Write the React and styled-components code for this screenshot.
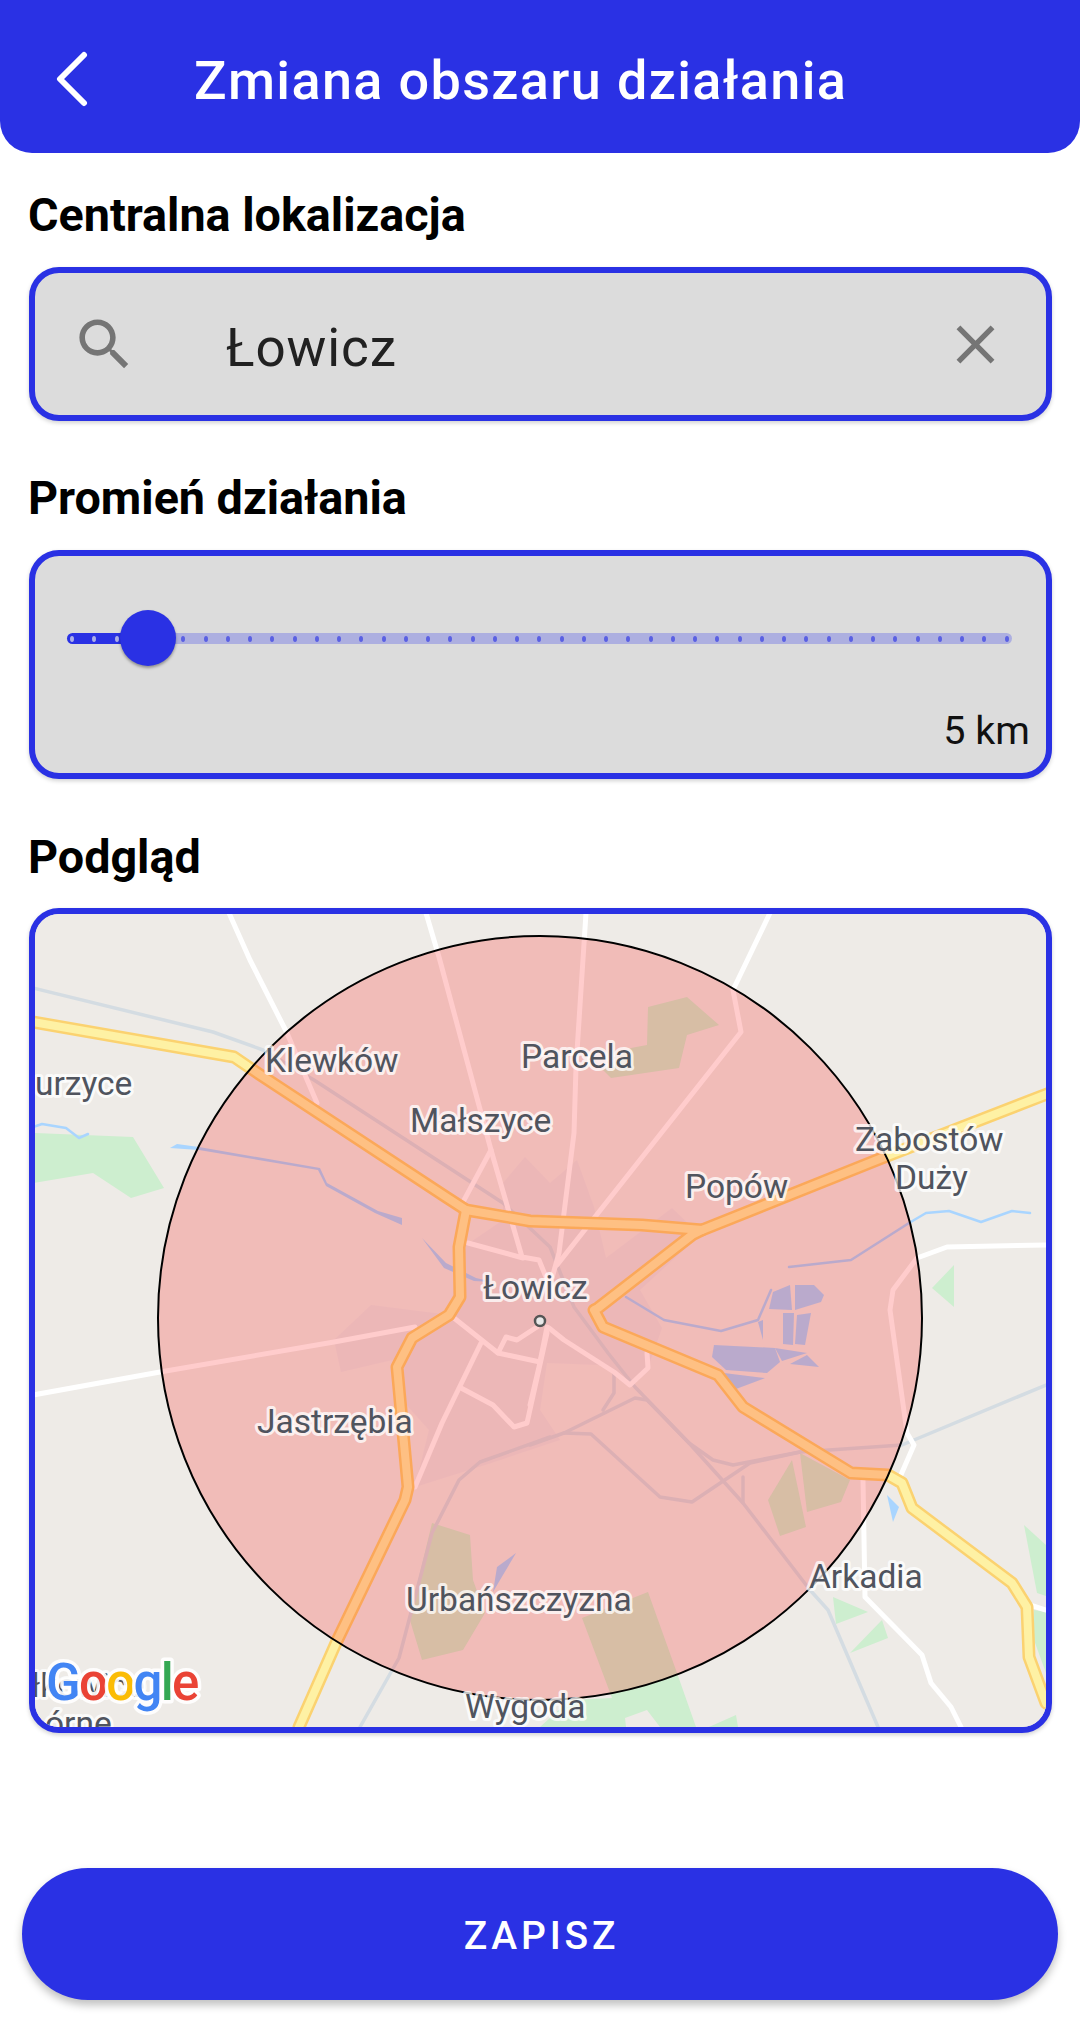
import React from 'react';
import styled, { createGlobalStyle } from 'styled-components';

const BLUE = '#2a31e4';

const Global = createGlobalStyle`
  html, body { margin: 0; padding: 0; background: #fff; }
  body { font-family: Roboto, "Liberation Sans", sans-serif; overflow: hidden; }
`;

const Page = styled.div`
  width: 1080px;
  height: 2022px;
  display: flex;
  flex-direction: column;
  background: #fff;
`;

const Header = styled.header`
  height: 153px;
  box-sizing: border-box;
  flex: none;
  display: flex;
  align-items: center;
  background: ${BLUE};
  border-radius: 0 0 32px 32px;
  padding: 5px 0 0 54px;
`;

const BackIcon = styled.svg`
  width: 36px;
  height: 56px;
  flex: none;
  fill: none;
  stroke: #fff;
  stroke-width: 6;
  stroke-linecap: round;
  stroke-linejoin: round;
`;

const Title = styled.h1`
  margin: 4px 0 0 104px;
  color: #fff;
  font-size: 54px;
  font-weight: 500;
  line-height: 58px;
  letter-spacing: 1.35px;
  white-space: nowrap;
`;

const Label = styled.h2`
  margin: ${p => p.$top}px 0 0 28px;
  height: 50px;
  color: #000;
  font-size: 46.7px;
  font-weight: 700;
  line-height: 50px;
  white-space: nowrap;
`;

const Panel = styled.div`
  box-sizing: border-box;
  width: 1023px;
  margin: ${p => p.$top}px 0 0 29px;
  border: 6px solid ${BLUE};
  border-radius: 30px;
  background: #dcdcdc;
  box-shadow: 0 2px 4px rgba(0, 0, 0, 0.18);
`;

const SearchPanel = styled(Panel)`
  height: 154px;
  display: flex;
  align-items: center;
  padding-left: 36px;
  padding-right: 38px;
`;

const SearchIcon = styled.svg`
  width: 67px;
  height: 67px;
  flex: none;
  fill: #757575;
`;

const SearchValue = styled.span`
  flex: 1;
  margin-left: 88px;
  padding-top: 8px;
  color: #212121;
  font-size: 53px;
  line-height: 60px;
  letter-spacing: 0.9px;
`;

const ClearIcon = styled.svg`
  width: 65px;
  height: 65px;
  flex: none;
  fill: #757575;
`;

const SliderPanel = styled(Panel)`
  height: 229px;
  padding: 77px 0 0 32px;
`;

const Track = styled.div`
  position: relative;
  width: 945px;
  height: 11px;
  box-sizing: border-box;
  padding: 0 3px;
  display: flex;
  align-items: center;
  justify-content: space-between;
  border-radius: 6px;
  background: linear-gradient(to right, ${BLUE} 0 81px, #adafe0 81px 100%);
`;

const Tick = styled.i`
  display: block;
  width: 4px;
  height: 6px;
  border-radius: 50%;
  background: ${p => (p.$on ? '#adafe8' : '#5a60e2')};
`;

const Thumb = styled.div`
  position: absolute;
  left: 53px;
  top: -23px;
  width: 56px;
  height: 56px;
  border-radius: 50%;
  background: ${BLUE};
  box-shadow: 0 2px 3px rgba(0, 0, 0, 0.35);
`;

const SliderValue = styled.div`
  margin: 65px 16px 0 0;
  text-align: right;
  color: #111;
  font-size: 39.5px;
  line-height: 44px;
`;

const MapPanel = styled(Panel)`
  height: 825px;
  overflow: hidden;
  background: #eeebe7;
`;

const MapSvg = styled.svg`
  display: block;
  width: 1011px;
  height: 813px;
`;

const PlaceName = styled.text`
  font-family: Roboto, sans-serif;
  font-size: 33.5px;
  fill: #50545e;
  stroke: rgba(255, 255, 255, 0.75);
  stroke-width: 6px;
  paint-order: stroke;
  stroke-linejoin: round;
`;

const GoogleMark = styled.text`
  font-family: Roboto, sans-serif;
  font-size: 51px;
  font-weight: 500;
  letter-spacing: -1.7px;
  stroke: rgba(255, 255, 255, 0.9);
  stroke-width: 7px;
  paint-order: stroke;
  stroke-linejoin: round;
`;

const SaveButton = styled.button`
  display: block;
  box-sizing: border-box;
  width: 1036px;
  height: 132px;
  margin: 135px 0 0 22px;
  padding: 4px 0 0 3px;
  border: 0;
  border-radius: 66px;
  background: ${BLUE};
  color: #fff;
  font-family: Roboto, sans-serif;
  font-size: 39px;
  font-weight: 500;
  letter-spacing: 3.8px;
  box-shadow: 0 5px 9px rgba(0, 0, 0, 0.25);
`;

const pts = a => a.map(p => p.join(',')).join(' ');

const greens = [
  [[33,1133],[133,1137],[164,1188],[131,1198],[93,1173],[33,1183]],
  [[954,1265],[932,1288],[954,1307]],
  [[1024,1525],[1046,1545],[1046,1596],[1037,1593]],
  [[1034,1610],[1046,1612],[1046,1673],[1034,1640]],
  [[833,1597],[868,1612],[836,1624]],
  [[882,1620],[888,1638],[850,1653]],
  [[582,1618],[648,1592],[677,1673],[696,1727],[660,1727],[647,1710],[625,1718],[626,1727],[540,1727],[570,1700],[612,1698]],
  [[709,1727],[736,1715],[738,1727]],
  [[648,1007],[687,997],[719,1025],[687,1035],[679,1068],[611,1078],[603,1070],[631,1048],[647,1045]],
  [[800,1453],[850,1480],[841,1502],[807,1512]],
  [[792,1460],[806,1527],[780,1536],[768,1500]],
  [[432,1523],[470,1535],[473,1580],[485,1613],[463,1650],[422,1660],[409,1617],[419,1577]],
  [[414,1350],[419,1350],[417,1369],[405,1367]],
];

const town = [[503,1183],[525,1157],[550,1183],[577,1160],[594,1207],[606,1258],[672,1208],[700,1235],[640,1290],[662,1328],[648,1367],[630,1385],[600,1365],[547,1363],[540,1410],[560,1440],[485,1465],[415,1487],[429,1430],[402,1400],[405,1357],[341,1372],[334,1340],[371,1305],[450,1315],[459,1250],[503,1220]];

const lakes = [
  [[714,1345],[775,1348],[780,1362],[767,1373],[726,1370],[712,1357]],
  [[724,1373],[765,1378],[736,1389]],
  [[775,1348],[807,1353],[782,1361]],
  [[807,1355],[819,1367],[790,1364]],
  [[783,1313],[794,1313],[793,1345],[783,1344]],
  [[797,1315],[811,1313],[805,1345],[795,1344]],
  [[773,1292],[790,1285],[792,1310],[769,1309]],
  [[795,1285],[814,1285],[824,1295],[821,1302],[795,1310]],
  [[758,1322],[763,1320],[763,1340]],
  [[170,1148],[177,1144],[199,1147],[320,1168],[327,1183],[378,1211],[402,1218],[402,1225],[375,1213],[326,1186],[318,1170],[199,1150]],
  [[422,1238],[446,1263],[476,1278],[493,1282],[474,1281],[444,1268]],
  [[516,1553],[500,1580],[493,1592],[497,1567]],
  [[887,1495],[899,1507],[893,1522]],
];

const rivers = [
  [[789,1267],[851,1260],[909,1223],[926,1213],[949,1211],[981,1222],[1012,1211],[1030,1213]],
  [[626,1297],[664,1320],[721,1331],[758,1320],[771,1290]],
  [[33,1127],[42,1124],[66,1128],[79,1138],[88,1134]],
];

const rails = [
  [[33,988],[213,1032],[263,1050],[314,1080],[503,1203],[550,1247],[574,1307],[608,1353],[635,1387],[689,1443],[743,1503],[810,1590],[828,1610],[878,1727]],
  [[550,1437],[480,1462],[459,1480],[432,1533],[399,1658],[360,1727]],
  [[530,1445],[564,1433],[635,1398],[647,1400],[689,1443],[713,1460],[733,1465],[800,1452],[902,1445],[1046,1385]],
  [[564,1433],[591,1434],[660,1497],[692,1502],[750,1463],[800,1452]],
  [[743,1477],[743,1503]],
  [[614,1373],[614,1393],[603,1410]],
];

const minor = [
  [[229,913],[250,960],[287,1033],[317,1103]],
  [[426,913],[439,957],[491,1150],[522,1257],[539,1260],[548,1282]],
  [[491,1150],[463,1202]],
  [[586,913],[576,1067],[574,1133],[559,1253],[552,1278]],
  [[770,913],[733,990],[741,1032],[557,1265]],
  [[33,1395],[160,1372],[334,1342],[415,1327]],
  [[468,1243],[523,1258]],
  [[454,1318],[498,1353],[540,1362],[547,1327]],
  [[498,1353],[506,1337],[517,1340],[540,1325]],
  [[481,1343],[442,1423],[415,1487]],
  [[461,1388],[493,1405],[514,1427],[527,1423],[547,1333],[530,1405]],
  [[549,1328],[564,1340],[614,1372],[630,1385],[648,1368],[647,1353]],
  [[1046,1245],[947,1247],[917,1258],[893,1290],[890,1310],[907,1433],[914,1445],[900,1477]],
  [[863,1480],[865,1597],[922,1655],[931,1683],[951,1707],[961,1727]],
  [[1030,1605],[1046,1610]],
];

const highways = [
  [[33,1022],[234,1057],[256,1072],[446,1197],[466,1210],[513,1218],[530,1221],[642,1225],[702,1230],[882,1158],[1047,1094]],
  [[466,1210],[459,1247],[460,1297],[449,1315],[412,1338],[397,1367],[408,1487],[405,1500],[336,1643],[299,1727]],
  [[702,1230],[692,1235],[598,1308],[594,1310],[603,1327],[718,1375],[743,1407],[851,1473],[888,1475],[902,1483],[912,1508],[1012,1583],[1027,1607],[1029,1657],[1046,1703]],
];

const places = [
  ['urzyce', 35, 1095],
  ['Klewków', 265, 1072],
  ['Parcela', 521, 1068],
  ['Małszyce', 410, 1132],
  ['Zabostów', 855, 1151],
  ['Duży', 895, 1189],
  ['Popów', 685, 1198],
  ['Łowicz', 483, 1299],
  ['Jastrzębia', 257, 1433],
  ['Urbańszczyzna', 406, 1611],
  ['Arkadia', 809, 1588],
  ['Wygoda', 465, 1718],
  ['ołkowice', 12, 1697],
  ['órne', 45, 1735],
];

const googleLetters = [
  ['G', '#4285f4'], ['o', '#ea4335'], ['o', '#fbbc05'],
  ['g', '#4285f4'], ['l', '#34a853'], ['e', '#ea4335'],
];

const Lines = ({ data, stroke, width }) =>
  data.map((d, i) => (
    <polyline key={i} points={pts(d)} fill="none" stroke={stroke} strokeWidth={width} strokeLinejoin="round" strokeLinecap="round" />
  ));

const Areas = ({ data, fill }) =>
  data.map((d, i) => <polygon key={i} points={pts(d)} fill={fill} />);

const ticks = Array.from({ length: 43 }, (_, i) => i);

export default function App() {
  return (
    <Page>
      <Global />
      <Header>
        <BackIcon viewBox="0 0 36 56"><path d="M30 4 L6 28 L30 52" /></BackIcon>
        <Title>Zmiana obszaru działania</Title>
      </Header>

      <Label $top={37}>Centralna lokalizacja</Label>
      <SearchPanel $top={27}>
        <SearchIcon viewBox="0 0 24 24">
          <path d="M15.5 14h-.79l-.28-.27C15.41 12.59 16 11.11 16 9.5 16 5.91 13.09 3 9.5 3S3 5.91 3 9.5 5.91 16 9.5 16c1.61 0 3.09-.59 4.23-1.57l.27.28v.79l5 4.99L20.49 19l-4.99-5zm-6 0C7.01 14 5 11.99 5 9.5S7.01 5 9.5 5 14 7.01 14 9.5 11.99 14 9.5 14z" />
        </SearchIcon>
        <SearchValue>Łowicz</SearchValue>
        <ClearIcon viewBox="0 0 24 24">
          <path d="M19 6.41L17.59 5 12 10.59 6.41 5 5 6.41 10.59 12 5 17.59 6.41 19 12 13.41 17.59 19 19 17.59 13.41 12z" />
        </ClearIcon>
      </SearchPanel>

      <Label $top={52}>Promień działania</Label>
      <SliderPanel $top={27}>
        <Track>
          {ticks.map(i => <Tick key={i} $on={i < 3} />)}
          <Thumb />
        </Track>
        <SliderValue>5 km</SliderValue>
      </SliderPanel>

      <Label $top={53}>Podgląd</Label>
      <MapPanel $top={26}>
        <MapSvg viewBox="35 914 1011 813">
          <rect x="35" y="914" width="1011" height="813" fill="#eeebe7" />
          <Areas data={greens} fill="#cdeecf" />
          <polygon points={pts(town)} fill="#e8e5e5" />
          <Areas data={lakes} fill="#a9d5ff" />
          <Lines data={rivers} stroke="#a9d5ff" width={2.5} />
          <Lines data={rails} stroke="#d4dce2" width={3.5} />
          <Lines data={minor} stroke="#ffffff" width={5} />
          <Lines data={highways} stroke="#fbd270" width={13} />
          <Lines data={highways} stroke="#fef1a4" width={8} />
          <circle cx="540" cy="1318" r="382" fill="rgba(255,0,0,0.2)" stroke="#000" strokeWidth="2" />
          <circle cx="540" cy="1321" r="5" fill="#e8e8e8" stroke="#555" strokeWidth="2.5" />
          {places.map(([t, x, y]) => (
            <PlaceName key={t} x={x} y={y}>{t}</PlaceName>
          ))}
          <GoogleMark x="46" y="1700">
            {googleLetters.map(([c, f], i) => <tspan key={i} fill={f}>{c}</tspan>)}
          </GoogleMark>
        </MapSvg>
      </MapPanel>

      <SaveButton>ZAPISZ</SaveButton>
    </Page>
  );
}
